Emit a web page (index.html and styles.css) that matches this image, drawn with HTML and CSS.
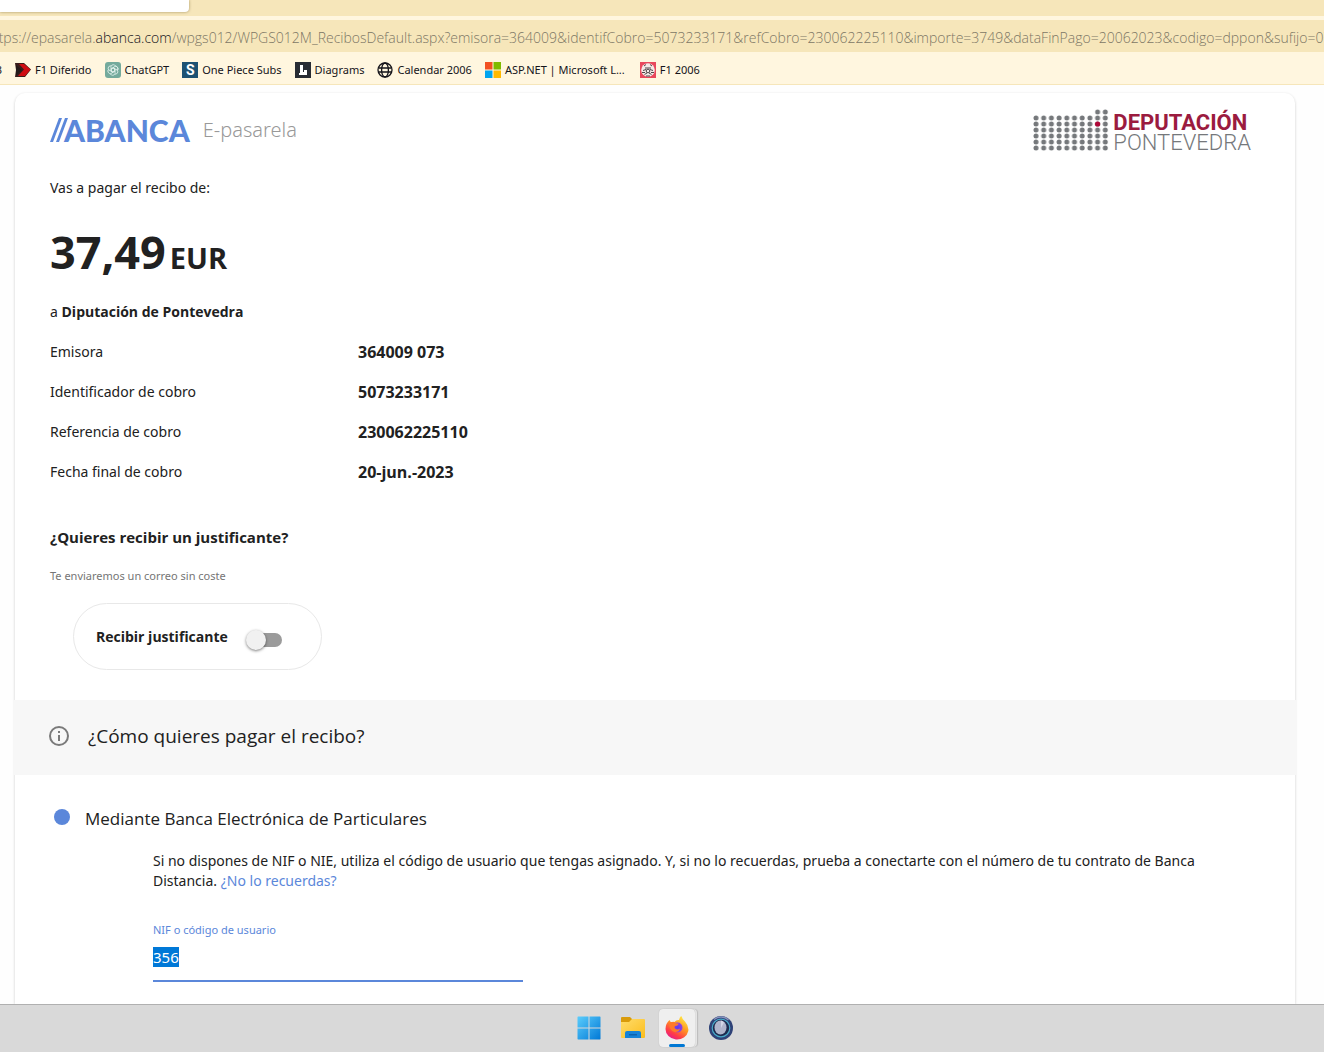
FILE: index.html
```html
<!DOCTYPE html>
<html lang="es">
<head>
<meta charset="utf-8">
<meta name="viewport" content="width=device-width, initial-scale=1">
<title>ABANCA E-pasarela</title>
<link rel="stylesheet" href="styles.css">
</head>
<body>
<header class="browser">
  <div class="tab-strip"><div class="active-tab"></div></div>
  <div class="address-bar"><span class="url">ttps://epasarela.<span class="domain">abanca.com</span>/wpgs012/WPGS012M_RecibosDefault.aspx?emisora=364009&amp;identifCobro=5073233171&amp;refCobro=230062225110&amp;importe=3749&amp;dataFinPago=20062023&amp;codigo=dppon&amp;sufijo=073</span></div>
  <nav class="bookmarks" aria-label="Marcadores">
    <a class="bookmark bm-cut" href="#">3</a>
    <a class="bookmark" href="#">
      <svg viewBox="0 0 16 16" aria-hidden="true"><path d="M0 1h9l7 6.500L10 15H0l1-7z" fill="#3a1d1b"/><path d="M4 2h5l6.500 5.500L10 14H3l6-6.500z" fill="#cf0c12"/><path d="M1 3l6 5-6 6z" fill="#241a1a"/></svg>F1 Diferido</a>
    <a class="bookmark" href="#">
      <svg viewBox="0 0 16 16" aria-hidden="true"><rect width="16" height="16" rx="3" fill="#74aa9c"/><g fill="none" stroke="#e8f5f1" stroke-width=".8"><path d="M6 4.200a2.600 2.600 0 0 1 4.600-.2 2.600 2.600 0 0 1 1.800 3.800M6 4.200v4.600l2 1.200"/><path d="M6 4.200a2.600 2.600 0 0 1 4.600-.2M6 4.200v4.600l2 1.200" transform="rotate(60 8 8)"/><path d="M6 4.200a2.600 2.600 0 0 1 4.600-.2M6 4.200v4.600l2 1.200" transform="rotate(120 8 8)"/><path d="M6 4.200a2.600 2.600 0 0 1 4.600-.2M6 4.200v4.600l2 1.200" transform="rotate(180 8 8)"/><path d="M6 4.200a2.600 2.600 0 0 1 4.600-.2M6 4.200v4.600l2 1.200" transform="rotate(240 8 8)"/><path d="M6 4.200a2.600 2.600 0 0 1 4.600-.2M6 4.200v4.600l2 1.200" transform="rotate(300 8 8)"/></g></svg>ChatGPT</a>
    <a class="bookmark" href="#"><span class="tile tile-ops" aria-hidden="true">S</span>One Piece Subs</a>
    <a class="bookmark" href="#">
      <svg viewBox="0 0 16 16" aria-hidden="true"><rect width="16" height="16" fill="#282c33"/><path d="M5 3h3v7h1V8h3v5H4v-2h1z" fill="#fff"/></svg>Diagrams</a>
    <a class="bookmark" href="#">
      <svg viewBox="0 0 16 16" aria-hidden="true"><g fill="none" stroke="#15141a" stroke-width="1.300"><circle cx="8" cy="8" r="7"/><ellipse cx="8" cy="8" rx="3.400" ry="7"/><path d="M1.500 6h13M1.500 10h13"/></g></svg>Calendar 2006</a>
    <a class="bookmark" href="#">
      <svg viewBox="0 0 16 16" aria-hidden="true"><path d="M0 0h7.500v7.500H0z" fill="#f25022"/><path d="M8.500 0H16v7.500H8.500z" fill="#7fba00"/><path d="M0 8.500h7.500V16H0z" fill="#00a4ef"/><path d="M8.500 8.500H16V16H8.500z" fill="#ffb900"/></svg>ASP.NET | Microsoft L...</a>
    <a class="bookmark bm-last" href="#">
      <svg viewBox="0 0 16 16" aria-hidden="true"><rect width="16" height="16" fill="#e8485c"/><circle cx="8" cy="8" r="6.800" fill="#f5e9e6"/><g fill="none" stroke="#4c4548"><path d="M4 4l2-1.500M12 4l-2-1.500M5 6h6M3 8.500l3-1M13 8.500l-3-1M4.500 12.500L7 11M11.500 12.500L9 11M6 14h4M2 10.500h3M11 10.500h3"/><circle cx="8" cy="9" r="1.800"/></g></svg>F1 2006</a>
  </nav>
</header>

<main class="page">
  <form class="card">
    <section class="receipt">
      <div class="brand-row">
        <div class="brand">
          <div class="abanca" role="img" aria-label="Abanca"><svg viewBox="0 0 18 24" aria-hidden="true"><path d="M0 24L9 0h3L3 24zM6 24L15 0h3L9 24z" fill="#5b87da"/></svg><span>ABANCA</span></div>
          <span class="product">E-pasarela</span>
        </div>
        <div class="issuer">
          <svg class="dots" viewBox="0 0 76 42" aria-hidden="true">
            <defs><pattern id="dot" width="7.700" height="6" patternUnits="userSpaceOnUse"><circle cx="3" cy="3" r="2.500" fill="#75787b"/></pattern></defs>
            <path d="M0 6h76v36H0zM61.600 0H76v6H61.600z" fill="url(#dot)"/>
            <circle cx="64.600" cy="15" r="2.600" fill="#b00838"/>
          </svg>
          <div class="issuer-name"><strong>DEPUTACIÓN</strong><span>PONTEVEDRA</span></div>
        </div>
      </div>
      <p class="intro">Vas a pagar el recibo de:</p>
      <p class="amount">37,49<span class="currency">EUR</span></p>
      <p class="payee">a <strong>Diputación de Pontevedra</strong></p>
      <table class="details">
        <tr><th scope="row">Emisora</th><td>364009 073</td></tr>
        <tr><th scope="row">Identificador de cobro</th><td>5073233171</td></tr>
        <tr><th scope="row">Referencia de cobro</th><td>230062225110</td></tr>
        <tr><th scope="row">Fecha final de cobro</th><td>20-jun.-2023</td></tr>
      </table>
      <h2 class="question">¿Quieres recibir un justificante?</h2>
      <p class="hint">Te enviaremos un correo sin coste</p>
      <label class="receipt-toggle" for="justificante">Recibir justificante<input class="switch" type="checkbox" id="justificante"></label>
    </section>

    <div class="band">
      <svg viewBox="0 0 20 20" aria-hidden="true"><circle cx="10" cy="10" r="9" fill="none" stroke="#7a7a7a" stroke-width="2"/><path d="M9 5h2v2H9zM9 9h2v6H9z" fill="#7a7a7a"/></svg>
      <h2>¿Cómo quieres pagar el recibo?</h2>
    </div>

    <section class="method">
      <div class="method-choice">
        <input class="radio" type="radio" name="metodo" id="particulares" checked>
        <label for="particulares">Mediante Banca Electrónica de Particulares</label>
      </div>
      <div class="method-body">
        <p>Si no dispones de NIF o NIE, utiliza el código de usuario que tengas asignado. Y, si no lo recuerdas, prueba a conectarte con el número de tu contrato de Banca Distancia. <a href="#">¿No lo recuerdas?</a></p>
        <div class="field">
          <label for="usuario">NIF o código de usuario</label>
          <input type="text" id="usuario" value="356">
        </div>
      </div>
    </section>
  </form>
</main>

<footer class="taskbar">
  <button class="task" type="button" aria-label="Inicio">
    <svg viewBox="0 0 24 24"><defs><linearGradient id="win" x2="1" y2="1"><stop stop-color="#5bcdfc"/><stop offset="1" stop-color="#0078d6"/></linearGradient></defs><path d="M1 .5h10.500V11.500H.5V1zM12.500.5H23l.5.5v10.500h-11zM.5 12.500h11v11H1L.5 23zM12.500 12.500h11V23l-.5.5H12.500z" fill="url(#win)"/></svg>
  </button>
  <button class="task" type="button" aria-label="Explorador de archivos">
    <svg viewBox="0 0 24 24"><defs><linearGradient id="fold" x2="1" y2="1"><stop stop-color="#ffdc6b"/><stop offset="1" stop-color="#fbbd1d"/></linearGradient></defs><path d="M0 2q0-1 1-1h8l2 2v5H0z" fill="#d99b0b"/><path d="M0 6h8l3-3h12q1 0 1 1v17q0 1-1 1H1q-1 0-1-1z" fill="url(#fold)"/><path d="M4 22v-5q0-2 2-2h12q2 0 2 2v5z" fill="#1583d8"/><path d="M8 18h8v1.500H8z" fill="#0d62ae"/></svg>
  </button>
  <button class="task task-active" type="button" aria-label="Firefox">
    <svg viewBox="0 0 24 24"><defs><linearGradient id="fox" x1=".8" y1="0" x2=".2" y2="1"><stop stop-color="#fff04a"/><stop offset=".4" stop-color="#ff9b20"/><stop offset=".75" stop-color="#ff3b48"/><stop offset="1" stop-color="#e0179b"/></linearGradient><radialGradient id="globe"><stop stop-color="#5a3df0"/><stop offset="1" stop-color="#9640e0"/></radialGradient></defs><path d="M4.500 4q.5 1.500 1.500 2.200 2-.8 3.500-.2Q11.500 3.500 14 4q.5-3 2.500-4 .5 3 3.500 5.500Q24 10 23.300 15A11.500 10.500 0 0 1 .5 13Q.5 7.500 4.500 4z" fill="url(#fox)"/><circle cx="12.500" cy="11.500" r="5" fill="url(#globe)"/><path d="M4 7q4-2 7 .2l2.500.3q0 2-3.500 2.500-1.500 1.500.5 3 2.500 1 4.500-.5-1 4-5.500 3.500-5-1-5.500-9z" fill="#ff7a2a"/></svg>
    <span class="running"></span>
  </button>
  <button class="task" type="button" aria-label="Monitor">
    <svg viewBox="0 0 24 24"><circle cx="12" cy="12" r="12" fill="#2f4277"/><circle cx="12" cy="12" r="8.800" fill="#1d2c50" stroke="#48a9c9" stroke-width="1.200"/><ellipse cx="11.500" cy="11.500" rx="6" ry="7" fill="#b0b5cc"/><path d="M12 4.500a6 7 0 0 1 3 2L12 12z" fill="#d3d7e6"/><path d="M5 3.500A11 11 0 0 1 19.500 4" fill="none" stroke="#8893bd" stroke-width="1.300"/></svg>
  </button>
</footer>
<script src="main.js"></script>
</body>
</html>
```
FILE: main.js
```js
// The user code starts out focused and selected, ready to be typed over.
const user = document.getElementById("usuario");
user.focus({ preventScroll: true });
user.select();
```
FILE: styles.css
```css
:root {
  --text: "Noto Sans", "Open Sans", sans-serif;
  --display: "Open Sans", "Noto Sans", sans-serif;
  --blue: #5b87da;
}

* { box-sizing: border-box; }

body {
  margin: 0;
  height: 100vh;
  display: flex;
  flex-direction: column;
  overflow: hidden;
  background: #fefefe;
  color: #212121;
  font: 14px/20px var(--text);
}

p, h2 { margin: 0; }

strong { font-family: var(--display); }

button, input { font: inherit; color: inherit; }

/* Browser chrome */
.browser {
  flex: none;
  background: #fff6df;
  border-bottom: 1px solid #f6e6ba;
}

.tab-strip {
  height: 16px;
  margin-bottom: 4px;
  background: #f6e6ba;
}

.active-tab {
  width: 189px;
  height: 12px;
  border-radius: 0 0 4px 0;
  background: #fff;
  box-shadow: 0 0 3px rgba(80, 60, 0, .5);
}

.address-bar {
  height: 32px;
  overflow: hidden;
  background: #f6e6ba;
  color: #7d7765;
  font-family: var(--display);
  font-weight: 300;
  line-height: 35px;
  text-indent: -6px;
  white-space: nowrap;
}

.domain { color: #15141a; }

.bookmarks {
  display: flex;
  align-items: center;
  gap: 13px;
  height: 32px;
  padding-top: 4px;
  overflow: hidden;
}

.bookmark {
  display: flex;
  align-items: center;
  gap: 4px;
  color: #15141a;
  font-size: 11px;
  line-height: 16px;
  text-decoration: none;
  white-space: nowrap;
}

.bookmark svg, .tile { flex: none; width: 16px; height: 16px; }

.bm-cut { width: 2px; justify-content: flex-end; }

.bm-last { margin-left: 2px; }

.tile-ops {
  background: #1d5273;
  color: #fff;
  font-family: "Roboto", sans-serif;
  font-size: 14px;
  font-weight: 700;
  text-align: center;
}

/* Payment page */
.page {
  flex: 1;
  min-height: 0;
  overflow: hidden;
  padding: 8px 29px 0 15px;
}

.card {
  min-height: 100%;
  border-radius: 10px 10px 0 0;
  background: #fff;
  box-shadow: 0 1px 3px rgba(0, 0, 0, .2);
}

.receipt { padding: 16px 44px 30px 35px; }

.brand-row, .brand, .abanca, .issuer { display: flex; align-items: center; }

.brand-row { justify-content: space-between; height: 42px; }

.brand { gap: 13px; }

.abanca {
  color: var(--blue);
  font-family: "Lato", sans-serif;
  font-size: 30px;
  font-weight: 900;
  line-height: 42px;
}

.abanca svg { width: 18px; height: 24px; margin-right: -4px; }

.product {
  color: #999;
  font-size: 20px;
  font-weight: 300;
}

.issuer { gap: 4px; }

.dots { width: 76px; height: 42px; }

.issuer-name {
  display: grid;
  padding-top: 5px;
  color: #75787b;
  font: 22px/20px "Roboto", sans-serif;
}

.issuer-name strong { color: #9b1b3f; font-family: inherit; }

.issuer-name span { font-weight: 300; }

.intro { margin-top: 27px; }

.amount {
  margin-top: 22px;
  font-family: var(--display);
  font-size: 45px;
  font-weight: 700;
  line-height: 64px;
}

.currency { margin-left: 4px; font-size: 29px; }

.payee { margin-top: 12px; }

.details { margin-top: 10px; border-collapse: collapse; }

.details th {
  width: 308px;
  padding: 10px 0;
  font-weight: 400;
  text-align: left;
}

.details td {
  padding: 0;
  font-family: var(--display);
  font-size: 16px;
  font-weight: 700;
}

.question {
  margin-top: 35px;
  font-family: var(--display);
  font-size: 15px;
  font-weight: 700;
}

.hint {
  margin-top: 19px;
  color: #757575;
  font-size: 11px;
}

.receipt-toggle {
  display: flex;
  align-items: center;
  justify-content: space-between;
  width: 249px;
  height: 67px;
  margin: 17px 0 0 23px;
  padding: 0 39px 0 22px;
  border: 1px solid #e8e8e8;
  border-radius: 34px;
  font-family: var(--display);
  font-weight: 700;
}

.switch {
  position: relative;
  appearance: none;
  width: 34px;
  height: 14px;
  margin: 6px 0 0;
  border-radius: 7px;
  background: #9b9b9b;
}

.switch::before {
  content: "";
  position: absolute;
  top: -3px;
  left: -2px;
  width: 20px;
  height: 20px;
  border-radius: 50%;
  background: #f1f1f1;
  box-shadow: 0 1px 3px rgba(0, 0, 0, .5);
}

.switch:checked::before { left: 16px; }

.band {
  display: flex;
  align-items: center;
  gap: 19px;
  height: 75px;
  margin: 0 -2px;
  padding: 0 36px 3px;
  background: #f7f7f7;
}

.band svg { width: 20px; height: 20px; }

.band h2 {
  font-family: var(--display);
  font-size: 19px;
  font-weight: 400;
  line-height: 28px;
}

.method { padding: 32px 84px 22px 39px; }

.method-choice {
  display: flex;
  align-items: center;
  gap: 15px;
  font-family: var(--display);
  font-size: 17px;
  line-height: 24px;
}

.radio {
  appearance: none;
  width: 16px;
  height: 16px;
  margin: 0 0 4px;
  border-radius: 50%;
  background: #ccc;
}

.radio:checked { background: var(--blue); }

.method-body { padding: 20px 0 0 99px; }

.method-body a { color: var(--blue); text-decoration: none; }

.field {
  display: grid;
  width: 370px;
  margin-top: 29px;
}

.field label { color: var(--blue); font-size: 11px; }

.field input {
  height: 42px;
  padding: 0 0 6px;
  border: 0;
  border-bottom: 2px solid var(--blue);
  outline: 0;
  background: none;
  font-size: 15px;
}

.field input::selection { background: #0078d7; color: #fff; }

/* Taskbar */
.taskbar {
  flex: none;
  display: flex;
  justify-content: center;
  gap: 8px;
  height: 48px;
  padding: 4px 14px 5px 0;
  border-top: 1px solid #b0b0b0;
  background: #d9d9d9;
}

.task {
  display: grid;
  place-items: center;
  position: relative;
  width: 36px;
  padding: 0;
  border: 0;
  border-radius: 4px;
  background: none;
}

.task svg { width: 24px; height: 24px; }

.task-active {
  background: #efefef;
  box-shadow: 0 0 1px #aaa, 2px 0 0 #e5e5e5, 3px 0 1px #bbb;
}

.running {
  position: absolute;
  bottom: 0;
  left: 10px;
  width: 16px;
  height: 3px;
  border-radius: 2px;
  background: #0078d4;
}
```
